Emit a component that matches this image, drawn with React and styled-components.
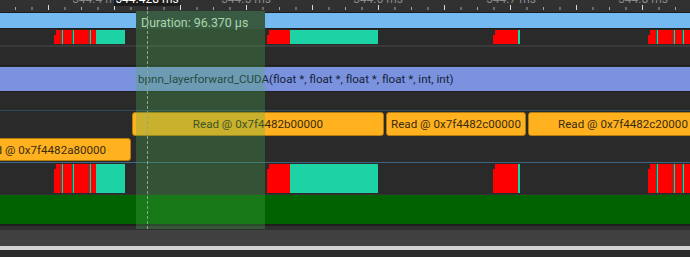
import React from "react";
import styled, { createGlobalStyle } from "styled-components";

const GlobalStyle = createGlobalStyle`
  html, body { margin: 0; padding: 0; background: #2a2a2a; }
  body { font-family: Roboto, "Noto Sans", sans-serif; }
`;

const RED = "#ff0000";
const TEAL = "#1dd3a6";

const Timeline = styled.div`
  position: relative;
  width: 690px;
  height: 257px;
  overflow: hidden;
  display: flex;
  flex-direction: column;
  background: #2a2a2a;
`;

const Ruler = styled.div`
  position: relative;
  height: 12px;
  flex: none;
  background-color: #313131;
  background-image:
    linear-gradient(to right, #d8d8d8 0 1px, transparent 1px),
    linear-gradient(to right, #a8a8a8 0 1px, transparent 1px);
  background-size: 66px 5px, 16.5px 3px;
  background-position: 48px 5px, 15px 7px;
  background-repeat: repeat-x;
  border-bottom: 1px solid #1c1c1c;
`;

const RulerLabel = styled.div`
  position: absolute;
  top: -8px;
  transform: translateX(-50%);
  font-size: 12px;
  line-height: 14px;
  color: #8a8a8a;
  white-space: nowrap;
`;

const CursorLabel = styled.div`
  position: absolute;
  top: -8px;
  left: 114px;
  width: 66px;
  height: 14px;
  background: #1c1c1c;
  color: #ffffff;
  font-size: 12px;
  line-height: 14px;
  text-align: center;
  white-space: nowrap;
`;

const Track = styled.div`
  position: relative;
  flex: none;
  display: flex;
  align-items: stretch;
  gap: 2px;
  height: ${(p) => p.$h}px;
  padding: ${(p) => p.$pad || "0"};
  box-sizing: content-box;
  background: ${(p) => p.$bg || "#2a2a2a"};
  border-bottom: ${(p) => (p.$line ? `${p.$lineW || 1}px solid ${p.$line}` : "none")};
`;

const FullBar = styled.div`
  flex: 1;
  background: ${(p) => p.$color};
  color: #16213a;
  font-size: 11.6px;
  display: flex;
  align-items: center;
  padding-left: 138px;
  white-space: nowrap;
`;

const Block = styled.div`
  position: absolute;
  top: 1px;
  bottom: 1px;
  background: ${(p) => p.$color};
`;

const Stripe = styled.div`
  position: absolute;
  top: 1px;
  bottom: 1px;
  width: 1px;
  background: ${TEAL};
  box-shadow: -1px 0 0 #1b6b5a;
`;

const Notch = styled.div`
  position: absolute;
  top: 1px;
  width: 2px;
  height: 5px;
  background: #2a2a2a;
`;

const ReadBar = styled.div`
  flex: none;
  width: ${(p) => p.$w}px;
  margin-left: ${(p) => p.$ml || 0}px;
  box-sizing: border-box;
  background: #ffb11f;
  border: 1px solid #b57a0c;
  border-radius: 3px;
  color: #3a2c10;
  font-size: 11.6px;
  display: flex;
  align-items: center;
  justify-content: center;
  white-space: nowrap;
  overflow: hidden;
`;

const Selection = styled.div`
  position: absolute;
  left: 136px;
  top: 11px;
  width: 129px;
  height: 218px;
  background: rgba(76, 175, 80, 0.3);
  display: flex;
  flex-direction: column;
  pointer-events: none;
`;

const SelectionHeader = styled.div`
  height: 18px;
  background: #3a5b43;
  color: #a9d7a9;
  font-size: 12.4px;
  line-height: 14px;
  padding-left: 5px;
  padding-top: 5px;
  box-sizing: border-box;
  white-space: nowrap;
`;

const CursorLine = styled.div`
  position: absolute;
  left: 11px;
  top: 0;
  bottom: 0;
  width: 0;
  border-left: 1px dashed #8fa58f;
`;

const rulerLabels = [
  { x: 97, t: "544.4 ms" },
  { x: 246, t: "544.5 ms" },
  { x: 378, t: "544.6 ms" },
  { x: 511, t: "544.7 ms" },
  { x: 643, t: "544.8 ms" },
];

const activity = [
  { x: 54, w: 42, c: RED, stripes: [62, 73, 90], notch: true },
  { x: 96, w: 29, c: TEAL },
  { x: 267, w: 23, c: RED, notch: true },
  { x: 290, w: 88, c: TEAL },
  { x: 493, w: 25, c: RED, notch: true },
  { x: 518, w: 2, c: TEAL },
  { x: 648, w: 50, c: RED, stripes: [657, 674, 683], notch: true },
];

const ActivityRow = ({ h, line, lineW }) => (
  <Track $h={h} $line={line} $lineW={lineW}>
    {activity.map((b, i) => (
      <React.Fragment key={i}>
        <Block $color={b.c} style={{ left: b.x, width: b.w }} />
        {b.notch && <Notch style={{ left: b.x }} />}
        {(b.stripes || []).map((s) => (
          <Stripe key={s} style={{ left: s }} />
        ))}
      </React.Fragment>
    ))}
  </Track>
);

export default function App() {
  return (
    <>
      <GlobalStyle />
      <Timeline>
        <Ruler>
          {rulerLabels.map((l) => (
            <RulerLabel key={l.x} style={{ left: l.x }}>
              {l.t}
            </RulerLabel>
          ))}
          <CursorLabel>544.428 ms</CursorLabel>
        </Ruler>
        <Track $h={15} $line="#1e1e1e">
          <FullBar $color="#74b9ef" />
        </Track>
        <ActivityRow h={16} line="#3a3a3a" lineW={2} />
        <Track $h={18} $line="#1f1f1f" />
        <Track $h={24} $pad="1px 0 0" $line="#1f1f1f">
          <FullBar $color="#7b93de">
            bpnn_layerforward_CUDA(float *, float *, float *, float *, int, int)
          </FullBar>
        </Track>
        <Track $h={18} $line="#2f4a5c" />
        <Track $h={24} $pad="1px 0 1px 132px">
          <ReadBar $w={252}>Read @ 0x7f4482b00000</ReadBar>
          <ReadBar $w={140}>Read @ 0x7f4482c00000</ReadBar>
          <ReadBar $w={190}>Read @ 0x7f4482c20000</ReadBar>
        </Track>
        <Track $h={23} $pad="1px 0" $line="#3b6684">
          <ReadBar $w={180} $ml={-49}>
            Read @ 0x7f4482a80000
          </ReadBar>
        </Track>
        <ActivityRow h={31} line="#333333" lineW={1} />
        <Track $h={29} $bg="#006200" $line="#1e1e1e" $lineW={2} />
        <Track $h={4} $bg="#2f2f2f" />
        <Track $h={16} $bg="#404040" />
        <Track $h={4} $bg="#d2d2d2" />
        <Track $h={7} $bg="#2b2b2b" />
        <Selection>
          <SelectionHeader>Duration: 96.370 µs</SelectionHeader>
          <CursorLine />
        </Selection>
      </Timeline>
    </>
  );
}
